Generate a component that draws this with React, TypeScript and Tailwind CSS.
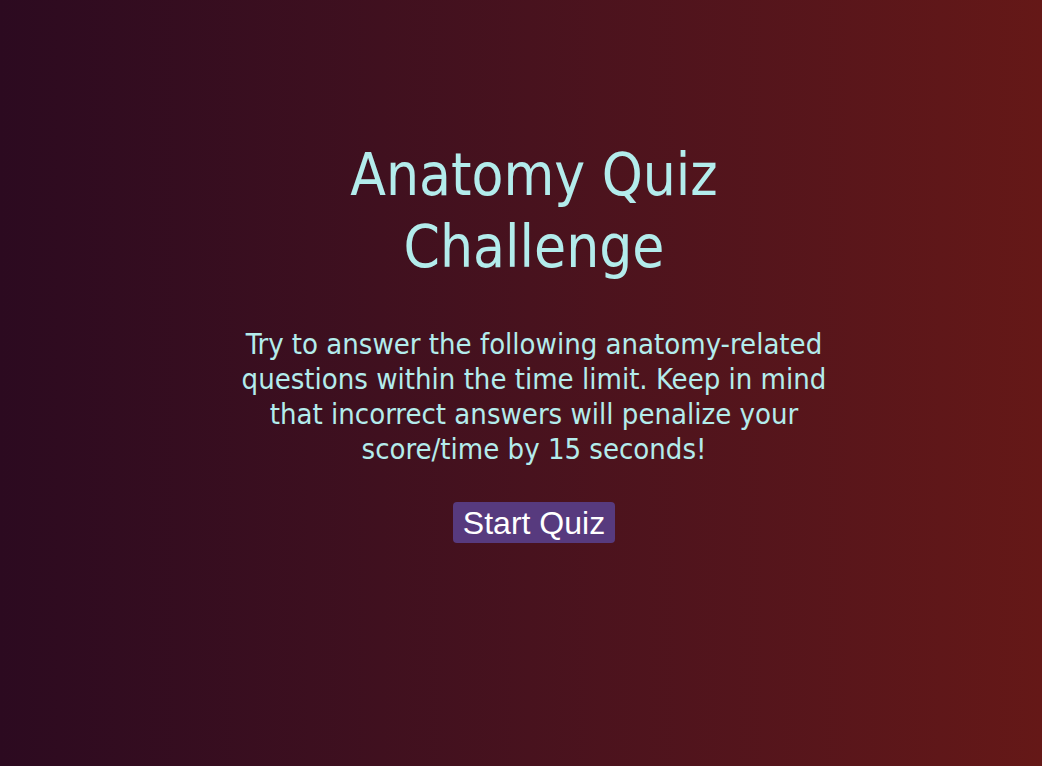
const App = () => {
  return (
    <main className="min-h-screen w-full bg-gradient-to-r from-[#2c0a20] to-[#651817] flex justify-center pl-[26px]">
      <section className="flex flex-col items-center text-center pt-[139px] w-[600px]">
        <h1
          className="text-[58px] leading-[72px] text-[#b3ecec] w-[420px]"
          style={{ fontFamily: '"DejaVu Sans Condensed", "Liberation Sans Narrow", sans-serif' }}
        >
          Anatomy Quiz Challenge
        </h1>
        <p
          className="mt-[44px] w-[590px] text-[29px] leading-[35px] text-[#b3ecec]"
          style={{ fontFamily: '"DejaVu Sans Condensed", "Liberation Sans Narrow", sans-serif' }}
        >
          Try to answer the following anatomy-related questions within the time limit. Keep in mind that incorrect
          answers will penalize your score/time by 15 seconds!
        </p>
        <button className="mt-[35px] h-[41px] px-[10px] rounded-[4px] bg-[#573a7e] text-white text-[32px] leading-none font-['Liberation_Sans',Arial,sans-serif]">
          Start Quiz
        </button>
      </section>
    </main>
  );
};

export default App;
